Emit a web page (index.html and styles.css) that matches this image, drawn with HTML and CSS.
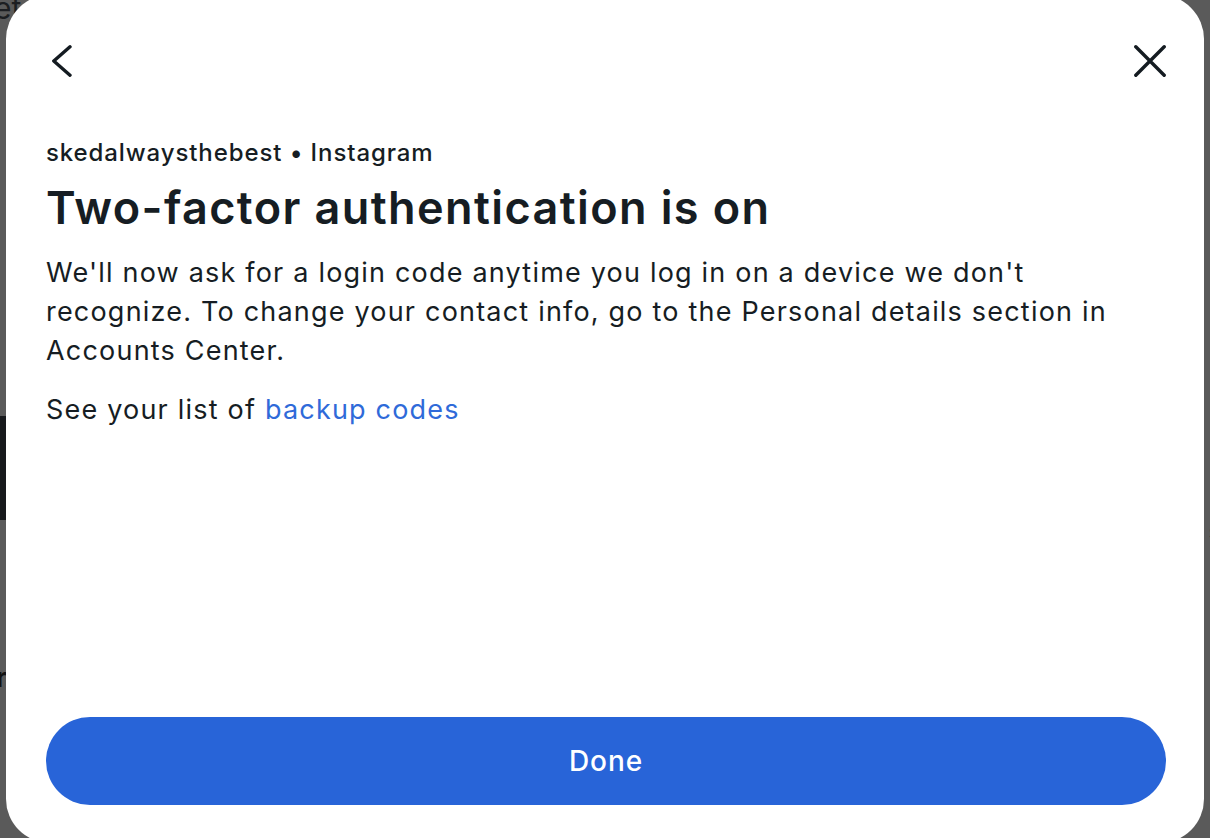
FILE: index.html
```html
<!DOCTYPE html>
<html lang="en">
<head>
<meta charset="utf-8">
<title>Two-factor authentication is on</title>
<link rel="stylesheet" href="styles.css">
</head>
<body>
<div class="page">
  <div class="page-top">et</div>
  <div class="page-bar"></div>
  <div class="page-letter">r</div>
  <div class="page-right">s</div>
</div>
<div class="overlay">
  <div class="modal" role="dialog">
    <div class="modal-header">
      <button class="icon-btn" aria-label="Back">
        <svg width="32" height="32" viewBox="0 0 32 32" fill="none" stroke="#141b21" stroke-width="3.4" stroke-linecap="round" stroke-linejoin="round"><path d="M24 1.8 L7.8 16 L24 30.2"/></svg>
      </button>
      <button class="icon-btn" aria-label="Close">
        <svg width="32" height="32" viewBox="0 0 32 32" fill="none" stroke="#141b21" stroke-width="3.4" stroke-linecap="round"><path d="M1.8 1.8 L30.2 30.2 M30.2 1.8 L1.8 30.2"/></svg>
      </button>
    </div>
    <div class="modal-body">
      <p class="account">skedalwaysthebest • Instagram</p>
      <h1 class="title">Two-factor authentication is on</h1>
      <p class="text">We'll now ask for a login code anytime you log in on a device we don't recognize. To change your contact info, go to the Personal details section in Accounts Center.</p>
      <p class="text">See your list of <a class="link" href="#">backup codes</a></p>
    </div>
    <button class="done-btn">Done</button>
  </div>
</div>
</body>
</html>
```

FILE: styles.css
```css
* { box-sizing: border-box; }
html, body { margin: 0; height: 100%; }
body {
  background: #5a5a5a;
  font-family: Inter, "Noto Sans", sans-serif;
  color: #161d23;
  overflow: hidden;
}
.page { position: relative; height: 100%; }
.page-top {
  position: absolute; left: -6px; top: -10px;
  font-size: 30px; color: #1c1e21;
}
.page-bar {
  position: absolute; left: 0; top: 416px;
  width: 8px; height: 104px; background: #17191c;
}
.page-letter {
  position: absolute; left: -4px; top: 662px;
  font-size: 26px; font-weight: 700; color: #111;
}
.page-right {
  position: absolute; right: -10px; top: 518px;
  font-size: 22px; color: #333;
}
.overlay {
  position: fixed; inset: 0;
}
.modal {
  position: absolute;
  left: 6px; right: 6px; top: -5px; bottom: -5px;
  background: #fff;
  border-radius: 44px;
  padding: 50px 38px 38px 40px;
  display: flex;
  flex-direction: column;
}
.modal-header {
  display: flex;
  justify-content: space-between;
  align-items: center;
  height: 32px;
}
.icon-btn {
  border: 0; background: none; padding: 0;
  width: 32px; height: 32px;
  display: block;
}
.icon-btn svg { display: block; }
.modal-body { flex: 1; padding-top: 61px; }
.account {
  margin: 0;
  font-size: 24px;
  line-height: 30px;
  font-weight: 500;
  letter-spacing: 0.9px;
}
.title {
  margin: 14px 0 19px;
  font-size: 45px;
  line-height: 52px;
  font-weight: 600;
  letter-spacing: 1.4px;
}
.text {
  margin: 0 -10px 20px 0;
  font-size: 27px;
  line-height: 39px;
  font-weight: 400;
  letter-spacing: 1.2px;
}
.link { color: #2f6ad9; text-decoration: none; }
.done-btn {
  border: 0;
  width: 100%;
  height: 88px;
  border-radius: 44px;
  background: #2864d8;
  color: #fff;
  font-family: inherit;
  font-size: 28px;
  font-weight: 500;
  letter-spacing: 0.9px;
}
```
